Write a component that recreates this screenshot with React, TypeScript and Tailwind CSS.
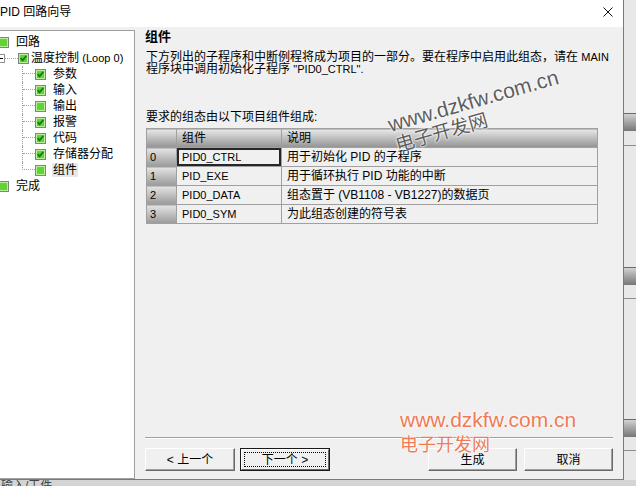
import React from 'react';

function Check({ checked }: { checked?: boolean }) {
  return (
    <svg width="11" height="11" viewBox="0 0 11 11" className="shrink-0">
      <rect x="0.5" y="0.5" width="10" height="10" fill="#b9ef98" stroke="#7d877d" />
      <rect x="2" y="2" width="7" height="7" fill="#62d236" />
      {checked && <path d="M2.6 5.2 L4.6 7.4 L8.4 2.8" fill="none" stroke="#16791a" strokeWidth="1.8" />}
    </svg>
  );
}

function ChildRow({ label, checked, last, selected }: any) {
  return (
    <div className="h-4 flex">
      <div className="w-[22px] shrink-0" />
      {last ? (
        <div className="w-[13px] h-2 border-l border-b border-dotted border-[#a0a0a0] shrink-0" />
      ) : (
        <div className="w-[13px] border-l border-dotted border-[#a0a0a0] shrink-0">
          <div className="h-2 border-b border-dotted border-[#a0a0a0]" />
        </div>
      )}
      <div className="flex items-center">
        <Check checked={checked} />
        <span className={`ml-[6px] px-[1px] leading-[14px] ${selected ? 'bg-[#e8e8e8]' : ''}`}>{label}</span>
      </div>
    </div>
  );
}

function Tree() {
  return (
    <div className="w-[135px] shrink-0 bg-white border-t border-r border-b border-[#a0a0a0] pt-[3px] overflow-hidden">
      <div className="h-4 flex items-center">
        <span className="ml-[-2px]"><Check /></span>
        <span className="ml-[7px]">回路</span>
      </div>
      <div className="h-4 flex items-center">
        <span className="ml-[-4px] w-[9px] h-[9px] border border-[#919191] bg-white flex items-center justify-center shrink-0">
          <span className="w-[5px] h-px bg-black" />
        </span>
        <span className="w-[13px] border-t border-dotted border-[#a0a0a0] shrink-0" />
        <Check checked />
        <span className="ml-[2px] whitespace-nowrap">温度控制 <span className="text-[11px]">(Loop 0)</span></span>
      </div>
      <ChildRow label="参数" checked />
      <ChildRow label="输入" checked />
      <ChildRow label="输出" />
      <ChildRow label="报警" checked />
      <ChildRow label="代码" checked />
      <ChildRow label="存储器分配" checked />
      <ChildRow label="组件" last selected />
      <div className="h-4 flex items-center">
        <span className="ml-[-2px]"><Check /></span>
        <span className="ml-[7px]">完成</span>
      </div>
    </div>
  );
}

const rows = [
  ['0', 'PID0_CTRL', '用于初始化 PID 的子程序'],
  ['1', 'PID_EXE', '用于循环执行 PID 功能的中断'],
  ['2', 'PID0_DATA', '组态置于 (VB1108 - VB1227)的数据页'],
  ['3', 'PID0_SYM', '为此组态创建的符号表'],
];

function Btn({ children, w }: any) {
  return (
    <div className={`h-[23px] ${w} bg-[#f0f0f0] border border-t-white border-l-white border-b-[#696969] border-r-[#696969] shadow-[inset_-1px_-1px_0_#a0a0a0] flex items-center justify-center`}>
      {children}
    </div>
  );
}

export default function App() {
  return (
    <div className="relative w-[636px] h-[486px] overflow-hidden bg-[#d4d4d4] text-[12px] leading-[14px] text-black [font-family:'Liberation_Sans','Noto_Sans_CJK_SC',sans-serif]">
      <div className="flex h-[480px]">
        {/* dialog */}
        <div className="w-[624px] shrink-0 flex flex-col border-r border-b border-[#7a7a7a]">
          <div className="h-[27px] bg-white flex items-center justify-between pr-[10px] pb-[3px]">
            <span className="whitespace-nowrap">PID 回路向导</span>
            <svg width="10" height="10" viewBox="0 0 10 10">
              <path d="M0.5 0.5 L9.5 9.5 M9.5 0.5 L0.5 9.5" stroke="#111" strokeWidth="1" />
            </svg>
          </div>
          <div className="flex-1 bg-[#f0f0f0] flex pt-[3px]">
            <Tree />
            <div className="flex-1 flex flex-col pl-[10px] pr-[10px]">
              <div className="font-bold text-[13px] leading-[14px]">组件</div>
              <div className="mt-[7px] ml-[1px] leading-[12px] whitespace-nowrap">
                <div>下方列出的子程序和中断例程将成为项目的一部分。要在程序中启用此组态，请在 <span className="text-[11px]">MAIN</span></div>
                <div>程序块中调用初始化子程序 <span className="text-[11px]">"PID0_CTRL".</span></div>
              </div>
              <div className="mt-[35px] ml-[1px]">要求的组态由以下项目组件组成:</div>
              <table className="mt-[4px] ml-[1px] w-[451px] table-fixed border-collapse">
                <colgroup>
                  <col className="w-[30px]" />
                  <col className="w-[105px]" />
                  <col className="w-[316px]" />
                </colgroup>
                <thead>
                  <tr className="h-[19px]">
                    <th className="border border-[#a0a0a0] bg-linear-to-b from-[#e8e8e8] to-[#939393]" />
                    <th className="border border-[#a0a0a0] bg-linear-to-b from-[#e8e8e8] to-[#939393] text-left font-normal pl-[5px]">组件</th>
                    <th className="border border-[#a0a0a0] bg-linear-to-b from-[#e8e8e8] to-[#939393] text-left font-normal pl-[5px]">说明</th>
                  </tr>
                </thead>
                <tbody>
                  {rows.map((r, i) => (
                    <tr key={r[0]} className="h-[19px]">
                      <td className="border border-[#a0a0a0] bg-linear-to-b from-[#e4e4e4] to-[#9a9a9a] pl-[3px] text-[11px]">{r[0]}</td>
                      <td className={`border border-[#a0a0a0] pl-[5px] text-[11px] whitespace-nowrap ${i === 0 ? 'shadow-[inset_0_0_0_2px_#262626]' : ''}`}>{r[1]}</td>
                      <td className="border border-[#a0a0a0] pl-[5px] whitespace-nowrap">{r[2]}</td>
                    </tr>
                  ))}
                </tbody>
              </table>
              <div className="flex-1" />
              <div className="h-px bg-[#a0a0a0]" />
              <div className="h-px bg-white" />
              <div className="mt-[9px] mb-[8px] flex">
                <Btn w="w-[90px]"><span>&lt; 上一个</span></Btn>
                <div className="ml-[5px] w-[90px] h-[23px] border border-[#1a1a1a] flex">
                  <div className="flex-1 flex bg-[#f0f0f0] border border-t-white border-l-white border-b-[#696969] border-r-[#696969]">
                    <div className="flex-1 m-[2px] border border-dotted border-black flex items-center justify-center">下一个 &gt;</div>
                  </div>
                </div>
                <div className="flex-1" />
                <Btn w="w-[89px]">生成</Btn>
                <div className="w-[7px]" />
                <Btn w="w-[89px]">取消</Btn>
              </div>
            </div>
          </div>
        </div>
        {/* window behind the dialog */}
        <div className="flex-1 bg-[#e8e8e8] flex flex-col">
          <div className="h-[113px]" />
          <div className="h-[18px] border-t border-[#6a6a6a] bg-linear-to-b from-[#d2d2d2] to-[#767676]" />
          <div className="h-[14px]" />
          <div className="h-px bg-[#8c8c8c]" />
          <div className="h-[121px]" />
          <div className="h-[18px] border-t border-[#6a6a6a] bg-linear-to-b from-[#d2d2d2] to-[#767676]" />
          <div className="h-[13px]" />
          <div className="h-px bg-[#8c8c8c]" />
          <div className="h-[120px]" />
          <div className="h-[18px] border-t border-[#6a6a6a] bg-linear-to-b from-[#d2d2d2] to-[#767676]" />
          <div className="h-[13px]" />
          <div className="h-px bg-[#8c8c8c]" />
        </div>
      </div>
      <div className="h-[6px] overflow-hidden bg-[#d4d4d4] text-[#444] leading-[12px] pl-[1px]">输入/工件</div>

      {/* watermarks */}
      <div className="absolute left-[385px] top-[90px] rotate-[-16deg] whitespace-nowrap text-[21px] leading-[21px] text-[#5e5e5e] [text-shadow:0_0_2px_#fff,0_0_2px_#fff,0_0_1px_#fff] pointer-events-none">www.dzkfw.com.cn</div>
      <div className="absolute left-[394px] top-[123px] rotate-[-16deg] whitespace-nowrap text-[19px] leading-[19px] text-[#5e5e5e] [text-shadow:0_0_2px_#fff,0_0_2px_#fff,0_0_1px_#fff] pointer-events-none">电子开发网</div>
      <div className="absolute left-[400px] top-[409px] whitespace-nowrap text-[21px] leading-[21px] text-[#ee7b55] [text-shadow:0_0_2px_#fff,0_0_2px_#fff,0_0_1px_#fff] pointer-events-none">www.dzkfw.com.cn</div>
      <div className="absolute left-[400px] top-[436px] whitespace-nowrap text-[18px] leading-[18px] text-[#ee7b55] [text-shadow:0_0_2px_#fff,0_0_2px_#fff,0_0_1px_#fff] pointer-events-none">电子开发网</div>
    </div>
  );
}
